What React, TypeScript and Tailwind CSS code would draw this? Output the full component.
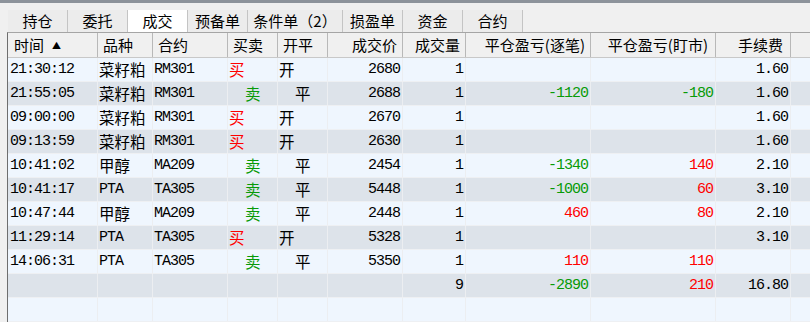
import React from 'react'

type Row = {
  time: string
  name: string
  code: string
  side: '买' | '卖' | ''
  oc: '开' | '平' | ''
  price: string
  qty: string
  pnl: string
  mtm: string
  fee: string
}

const rows: Row[] = [
  { time: '21:30:12', name: '菜籽粕', code: 'RM301', side: '买', oc: '开', price: '2680', qty: '1', pnl: '', mtm: '', fee: '1.60' },
  { time: '21:55:05', name: '菜籽粕', code: 'RM301', side: '卖', oc: '平', price: '2688', qty: '1', pnl: '-1120', mtm: '-180', fee: '1.60' },
  { time: '09:00:00', name: '菜籽粕', code: 'RM301', side: '买', oc: '开', price: '2670', qty: '1', pnl: '', mtm: '', fee: '1.60' },
  { time: '09:13:59', name: '菜籽粕', code: 'RM301', side: '买', oc: '开', price: '2630', qty: '1', pnl: '', mtm: '', fee: '1.60' },
  { time: '10:41:02', name: '甲醇', code: 'MA209', side: '卖', oc: '平', price: '2454', qty: '1', pnl: '-1340', mtm: '140', fee: '2.10' },
  { time: '10:41:17', name: 'PTA', code: 'TA305', side: '卖', oc: '平', price: '5448', qty: '1', pnl: '-1000', mtm: '60', fee: '3.10' },
  { time: '10:47:44', name: '甲醇', code: 'MA209', side: '卖', oc: '平', price: '2448', qty: '1', pnl: '460', mtm: '80', fee: '2.10' },
  { time: '11:29:14', name: 'PTA', code: 'TA305', side: '买', oc: '开', price: '5328', qty: '1', pnl: '', mtm: '', fee: '3.10' },
  { time: '14:06:31', name: 'PTA', code: 'TA305', side: '卖', oc: '平', price: '5350', qty: '1', pnl: '110', mtm: '110', fee: '' },
  { time: '', name: '', code: '', side: '', oc: '', price: '', qty: '9', pnl: '-2890', mtm: '210', fee: '16.80' },
  { time: '', name: '', code: '', side: '', oc: '', price: '', qty: '', pnl: '', mtm: '', fee: '' },
]

const tabs = [
  { label: '持仓', w: 'w-[60px]' },
  { label: '委托', w: 'w-[60px]' },
  { label: '成交', w: 'w-[60px]', active: true },
  { label: '预备单', w: 'w-[60px]' },
  { label: '条件单（2）', w: 'w-[95px]' },
  { label: '损盈单', w: 'w-[60px]' },
  { label: '资金', w: 'w-[60px]' },
  { label: '合约', w: 'w-[60px]' },
]

const mono = "font-['Liberation_Mono','Noto_Sans_CJK_SC',monospace] text-[15px] tracking-[-1px]"
const cjk = "font-['Noto_Sans_CJK_SC',sans-serif] text-[15.5px]"

const numColor = (v: string) => (v.startsWith('-') ? 'text-[#079a07]' : 'text-[#f00]')

function Cell({ w, className = '', children }: { w: string; className?: string; children?: React.ReactNode }) {
  return (
    <div className={`${w} shrink-0 h-full border-r border-[#eceef1] overflow-hidden whitespace-nowrap ${className}`}>
      {children}
    </div>
  )
}

export default function App() {
  return (
    <div className="w-[810px] h-[322px] overflow-hidden bg-[#f0f0f0] border-t-[3px] border-[#8d939b]">
      <div className="flex h-[22px] mt-[7px] ml-[8px] font-['Noto_Sans_CJK_SC',sans-serif] text-[15px] leading-[22px] text-black">
        {tabs.map((t) => (
          <div
            key={t.label}
            className={`${t.w} text-center border-r border-[#c4c4c4] ${t.active ? 'bg-white' : 'bg-[#ececec]'}`}
          >
            {t.label}
          </div>
        ))}
      </div>

      <div className="ml-[7px] border-l border-t border-l-[#6e6e6e] border-t-[#a5a5a5]">
        <div className="flex h-[25px] bg-[#f0f0f0] border-b border-[#c8c8c8] font-['Noto_Sans_CJK_SC',sans-serif] text-[15px] leading-[24px] text-black">
          <div className="w-[90px] shrink-0 border-r border-[#b8b8b8] pl-[6px] flex items-center gap-[8px]">
            时间<span className="text-[9px] leading-none">▲</span>
          </div>
          <div className="w-[55px] shrink-0 border-r border-[#b8b8b8] pl-[5px]">品种</div>
          <div className="w-[75px] shrink-0 border-r border-[#b8b8b8] pl-[5px]">合约</div>
          <div className="w-[50px] shrink-0 border-r border-[#b8b8b8] pl-[5px]">买卖</div>
          <div className="w-[50px] shrink-0 border-r border-[#b8b8b8] pl-[5px]">开平</div>
          <div className="w-[75px] shrink-0 border-r border-[#b8b8b8] pr-[5px] text-right">成交价</div>
          <div className="w-[63px] shrink-0 border-r border-[#b8b8b8] pr-[5px] text-right">成交量</div>
          <div className="w-[125px] shrink-0 border-r border-[#b8b8b8] pr-[5px] text-right">平仓盈亏(逐笔)</div>
          <div className="w-[125px] shrink-0 border-r border-[#b8b8b8] pr-[7px] text-right">平仓盈亏(盯市)</div>
          <div className="w-[75px] shrink-0 border-r border-[#b8b8b8] pr-[7px] text-right">手续费</div>
          <div className="flex-1" />
        </div>

        {rows.map((r, i) => (
          <div
            key={i}
            className={`flex h-[24px] border-b border-[#eef0f3] leading-[23px] text-black ${i % 2 === 0 ? 'bg-[#eff6fe]' : 'bg-[#dde3ea]'}`}
          >
            <Cell w="w-[90px]" className={`${mono} pl-[2px]`}>{r.time}</Cell>
            <Cell w="w-[55px]" className={`${r.name === 'PTA' ? mono : cjk} pl-[1px]`}>{r.name}</Cell>
            <Cell w="w-[75px]" className={`${mono} pl-[1px]`}>{r.code}</Cell>
            <Cell
              w="w-[50px]"
              className={`${cjk} ${r.side === '买' ? 'pl-[1px] text-[#f00]' : 'pl-[17px] text-[#079a07]'}`}
            >
              {r.side}
            </Cell>
            <Cell w="w-[50px]" className={`${cjk} ${r.oc === '开' ? 'pl-[1px]' : 'pl-[17px]'}`}>{r.oc}</Cell>
            <Cell w="w-[75px]" className={`${mono} pr-[2px] text-right`}>{r.price}</Cell>
            <Cell w="w-[63px]" className={`${mono} pr-[2px] text-right`}>{r.qty}</Cell>
            <Cell w="w-[125px]" className={`${mono} pr-[2px] text-right ${numColor(r.pnl)}`}>{r.pnl}</Cell>
            <Cell w="w-[125px]" className={`${mono} pr-[2px] text-right ${numColor(r.mtm)}`}>{r.mtm}</Cell>
            <Cell w="w-[75px]" className={`${mono} pr-[2px] text-right`}>{r.fee}</Cell>
            <div className="flex-1" />
          </div>
        ))}
      </div>
    </div>
  )
}
